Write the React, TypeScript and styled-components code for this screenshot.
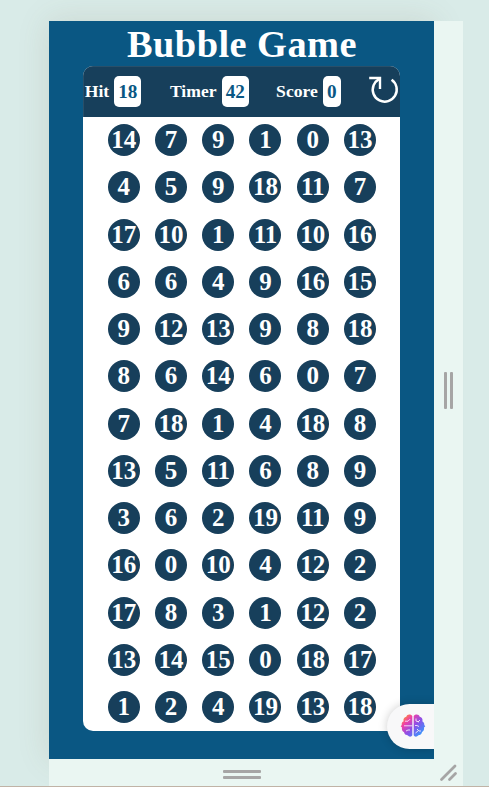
import React from "react";
import styled, { createGlobalStyle } from "styled-components";

const GlobalStyle = createGlobalStyle`
  * { box-sizing: border-box; }
  body {
    margin: 0;
    overflow: hidden;
    background: #d9ebe8;
    font-family: "Liberation Serif", "Times New Roman", serif;
  }
`;

const Workspace = styled.div`
  height: 787px;
  padding: 21px 26px 0 49px;
  border-bottom: 1px solid #c0b3a6;
  overflow: hidden;
`;

const DeviceFrame = styled.div`
  display: grid;
  grid-template-columns: 385px 29px;
  grid-template-rows: 738px 27px;
`;

const Screen = styled.main`
  position: relative;
  display: flex;
  flex-direction: column;
  align-items: center;
  background: #0a5783;
  box-shadow: 0 0 30px rgba(115, 95, 65, 0.15);
`;

const Title = styled.h1`
  margin: 0;
  height: 45px;
  padding-left: 1px;
  color: #fff;
  font-size: 38.4px;
  line-height: 47px;
  letter-spacing: 0.45px;
  white-space: nowrap;
`;

const Card = styled.section`
  width: 316.6px;
  height: 664.6px;
  margin-right: 0.6px;
  border-radius: 10px;
  overflow: hidden;
  background: #fff;
`;

const Panel = styled.header`
  display: flex;
  align-items: center;
  height: 51px;
  padding-left: 1.8px;
  background: #173f5b;
  box-shadow: inset 0.5px 0.5px 0 #3c6078;
`;

const Stat = styled.div<{ $gap: number }>`
  display: flex;
  align-items: center;
  gap: 5px;
  margin-right: ${(p) => p.$gap}px;
  color: #fff;
  font-size: 17.6px;
  font-weight: 700;
  line-height: 20px;
`;

const Label = styled.span`
  padding-bottom: 2px;
`;

const Value = styled.span<{ $width: number }>`
  display: flex;
  align-items: center;
  justify-content: center;
  width: ${(p) => p.$width}px;
  height: 31px;
  border-radius: 5px;
  background: #fff;
  color: #0a5783;
  font-size: 19.2px;
`;

const Reload = styled.svg`
  width: 32px;
  height: 32px;
  flex: none;
  margin-top: -3px;
`;

const Bubbles = styled.div`
  display: grid;
  grid-template-columns: repeat(6, 32px);
  grid-auto-rows: 32px;
  gap: 15.25px;
  padding: 7px 0 0 24.8px;
`;

const Bubble = styled.div`
  display: flex;
  align-items: center;
  justify-content: center;
  border-radius: 50%;
  background: #173f5b;
  color: #fff;
  font-size: 25px;
  font-weight: 700;
  line-height: 32px;
`;

const Assistant = styled.div`
  position: absolute;
  right: 0;
  bottom: 10px;
  width: 47px;
  height: 45px;
  padding: 10px 0 0 13px;
  border-radius: 23px 0 0 23px;
  background: #f8f8f9;
  box-shadow: 0 0 10px rgba(0, 0, 0, 0.2);
  clip-path: inset(-16px 0 -16px -16px);
`;

const Brain = styled.svg`
  display: block;
  width: 26px;
  height: 24px;
`;

const Gutter = styled.div`
  display: flex;
  align-items: center;
  justify-content: center;
  gap: 3px;
  background: #eaf6f2;
  z-index: 1;
`;

const BottomGutter = styled(Gutter)`
  flex-direction: column;
  padding-top: 4px;
`;

const Grip = styled.span<{ $horizontal?: boolean }>`
  width: ${(p) => (p.$horizontal ? 38 : 3)}px;
  height: ${(p) => (p.$horizontal ? 3 : 37)}px;
  border-radius: 1px;
  background: #a6a5a5;
`;

const CornerGrip = styled.svg`
  width: 29px;
  height: 27px;
`;

const rows = [
  [14, 7, 9, 1, 0, 13],
  [4, 5, 9, 18, 11, 7],
  [17, 10, 1, 11, 10, 16],
  [6, 6, 4, 9, 16, 15],
  [9, 12, 13, 9, 8, 18],
  [8, 6, 14, 6, 0, 7],
  [7, 18, 1, 4, 18, 8],
  [13, 5, 11, 6, 8, 9],
  [3, 6, 2, 19, 11, 9],
  [16, 0, 10, 4, 12, 2],
  [17, 8, 3, 1, 12, 2],
  [13, 14, 15, 0, 18, 17],
  [1, 2, 4, 19, 13, 18],
];

const stats = [
  { label: "Hit", value: 18, width: 27.2, gap: 28.6 },
  { label: "Timer", value: 42, width: 27.6, gap: 27 },
  { label: "Score", value: 0, width: 18, gap: 27 },
];

function BrainIcon() {
  return (
    <Brain viewBox="0 0 26 24">
      <defs>
        <linearGradient id="brain" x1="0.05" y1="0.1" x2="0.95" y2="0.9">
          <stop offset="0" stopColor="#ff9a24" />
          <stop offset="0.25" stopColor="#ef3fa9" />
          <stop offset="0.55" stopColor="#8b50e8" />
          <stop offset="1" stopColor="#2aa2ff" />
        </linearGradient>
      </defs>
      <path
        fill="url(#brain)"
        d="M12.3 2.1C10.2-.4 7 .4 6.3 2.7 3.8 3.2 3 5.7 3.7 7.2 1.7 8.2 1.5 9.6 1.8 10.9L.7 12.2 2 13.6C1.5 16.2 2.8 17.6 4 18.1 4.5 21 6.8 21.2 7.6 21.3 9.2 23.3 11.6 22.9 12.3 21.2ZM13.7 2.1C15.8-.4 19 .4 19.7 2.7 22.2 3.2 23 5.7 22.3 7.2 24 8.2 24.5 9.6 24.2 10.9L25.3 12.2 24 13.6C24.4 16.2 23.2 17.6 22 18.1 21.5 21 19.2 21.2 18.4 21.3 16.8 23.3 14.4 22.9 13.7 21.2Z"
      />
      <path
        fill="none"
        stroke="#f5e9fb"
        strokeWidth="0.9"
        d="M5 7.2H8L10 5.2M4 11.8H12.3M6 17L8 16H10M16 4.5V7L19 8M18 8L20 6M15 11.5H17L19 12.5M15.5 19L18 17M17 15L19 17H21"
      />
    </Brain>
  );
}

export default function App() {
  return (
    <>
      <GlobalStyle />
      <Workspace>
        <DeviceFrame>
          <Screen>
            <Title>Bubble Game</Title>
            <Card>
              <Panel>
                {stats.map((s) => (
                  <Stat key={s.label} $gap={s.gap}>
                    <Label>{s.label}</Label>
                    <Value $width={s.width}>{s.value}</Value>
                  </Stat>
                ))}
                <Reload viewBox="0 0 32 32" aria-label="Restart">
                  <path
                    d="M23.6 5.8A12 12 0 1 1 5.6 11.2Q7.3 7.3 11.5 4.6"
                    fill="none"
                    stroke="#fff"
                    strokeWidth="2.5"
                  />
                  <path
                    d="M1.2 4H12V15"
                    fill="none"
                    stroke="#fff"
                    strokeWidth="2.4"
                  />
                </Reload>
              </Panel>
              <Bubbles>
                {rows.flatMap((row, r) =>
                  row.map((n, c) => <Bubble key={`${r}-${c}`}>{n}</Bubble>)
                )}
              </Bubbles>
            </Card>
            <Assistant>
              <BrainIcon />
            </Assistant>
          </Screen>
          <Gutter>
            <Grip />
            <Grip />
          </Gutter>
          <BottomGutter>
            <Grip $horizontal />
            <Grip $horizontal />
          </BottomGutter>
          <Gutter>
            <CornerGrip viewBox="0 0 29 27">
              <path
                d="M7.5 20.5L21 7M15.5 20.5L21.5 14.5"
                stroke="#a6a5a5"
                strokeWidth="2.8"
                strokeLinecap="round"
              />
            </CornerGrip>
          </Gutter>
        </DeviceFrame>
      </Workspace>
    </>
  );
}
